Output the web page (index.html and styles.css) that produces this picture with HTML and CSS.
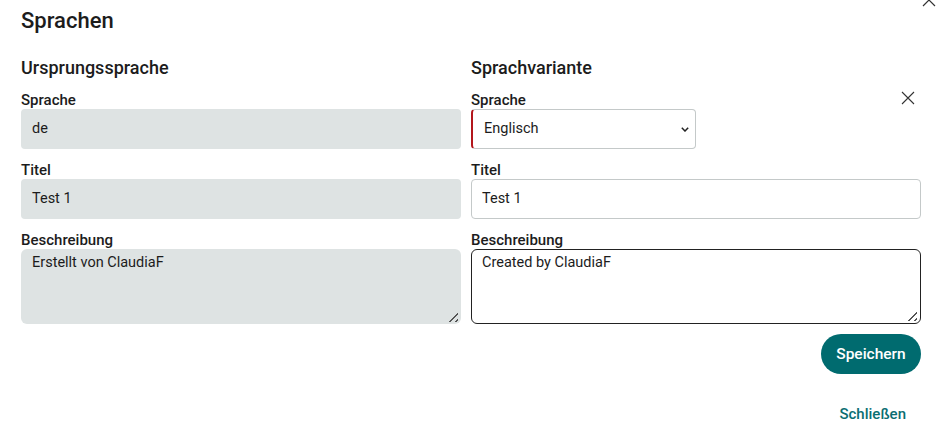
FILE: index.html
```html
<!DOCTYPE html>
<html lang="de">
<head>
<meta charset="utf-8">
<link rel="stylesheet" href="styles.css">
</head>
<body>
<div class="dialog">
  <button class="top-close" aria-label="Schließen">
    <svg width="16" height="16" viewBox="0 0 16 16"><path d="M2 2L14 14M14 2L2 14" stroke="#333" stroke-width="1.2" fill="none"/></svg>
  </button>
  <h1 class="title">Sprachen</h1>
  <div class="cols">
    <section class="col">
      <h2 class="col-title">Ursprungssprache</h2>
      <label class="lbl">Sprache</label>
      <div class="field ro">de</div>
      <label class="lbl">Titel</label>
      <div class="field ro">Test 1</div>
      <label class="lbl">Beschreibung</label>
      <div class="area ro">Erstellt von ClaudiaF<span class="grip"></span></div>
    </section>
    <section class="col right">
      <h2 class="col-title">Sprachvariante</h2>
      <div class="lbl-row">
        <label class="lbl">Sprache</label>
        <button class="x-btn" aria-label="Entfernen">
          <svg width="14" height="14" viewBox="0 0 14 14"><path d="M1 1L13 13M13 1L1 13" stroke="#333" stroke-width="1.1" fill="none"/></svg>
        </button>
      </div>
      <div class="select">Englisch
        <svg class="chev" width="8" height="5" viewBox="0 0 8 5"><path d="M0.8 0.8L4 4L7.2 0.8" stroke="#222" stroke-width="1.5" fill="none"/></svg>
      </div>
      <label class="lbl">Titel</label>
      <div class="field edit">Test 1</div>
      <label class="lbl">Beschreibung</label>
      <div class="area edit dark">Created by ClaudiaF<span class="grip"></span></div>
      <div class="actions">
        <button class="save">Speichern</button>
      </div>
    </section>
  </div>
  <div class="footer">
    <button class="link">Schließen</button>
  </div>
</div>
</body>
</html>
```
FILE: styles.css
```css
* { box-sizing: border-box; }
body {
  margin: 0;
  background: #fff;
  font-family: Roboto, "Noto Sans", Arial, sans-serif;
  color: #1c1c1c;
  width: 940px;
  height: 435px;
  overflow: hidden;
}
.dialog {
  position: relative;
  padding: 7px 19px 0 21px;
}
.top-close {
  position: absolute;
  top: -8px;
  right: 3px;
  border: 0;
  background: none;
  padding: 0;
  width: 16px;
  height: 16px;
}
.title {
  margin: 0;
  font-size: 22px;
  font-weight: 500;
  line-height: 28px;
  color: #1c1c1c;
}
.cols {
  display: grid;
  grid-template-columns: 440px 450px;
  column-gap: 10px;
  margin-top: 22px;
}
.col { display: flex; flex-direction: column; }
.col-title {
  margin: 0 0 12px;
  font-size: 18px;
  font-weight: 500;
  line-height: 22px;
}
.lbl {
  display: block;
  font-size: 15px;
  font-weight: 500;
  line-height: 18px;
}
.lbl-row {
  display: flex;
  justify-content: space-between;
  align-items: flex-start;
}
.x-btn {
  border: 0;
  background: none;
  padding: 0;
  width: 14px;
  height: 14px;
  margin: 0 6px 0 0;
  display: flex;
}
.field, .select {
  height: 40px;
  border-radius: 4px;
  font-size: 14.5px;
  line-height: 20px;
  padding: 10px 11px;
  margin-bottom: 12px;
}
.ro { background: #dee3e3; border: 0; }
.edit { border: 1px solid #c4c9c9; background: #fff; padding: 9px 10px; }
.select {
  width: 225px;
  border: 1px solid #c4c9c9;
  border-left: 2px solid #b3161c;
  padding: 9px 6px 9px 11px;
  display: flex;
  align-items: center;
  justify-content: space-between;
}
.area {
  position: relative;
  height: 75px;
  border-radius: 6px;
  font-size: 14.5px;
  line-height: 18px;
  padding: 5px 11px;
}
.area.dark { border: 1px solid #222; padding: 4px 10px; }
.grip {
  position: absolute;
  right: 3px;
  bottom: 2px;
  width: 12px;
  height: 12px;
  background: repeating-linear-gradient(135deg, transparent 0 2.5px, #555 2.5px 4px);
  clip-path: polygon(100% 0, 100% 100%, 0 100%);
}
.actions {
  display: flex;
  justify-content: flex-end;
  margin-top: 10px;
}
.save {
  width: 100px;
  height: 40px;
  border: 0;
  border-radius: 20px;
  background: #006b6f;
  color: #fff;
  font-family: inherit;
  font-size: 15.5px;
  font-weight: 500;
}
.footer {
  display: flex;
  justify-content: flex-end;
  margin-top: 31px;
  padding-right: 15px;
}
.link {
  border: 0;
  background: none;
  padding: 0;
  color: #0b6e72;
  font-family: inherit;
  font-size: 15px;
  font-weight: 500;
  line-height: 18px;
}
```
